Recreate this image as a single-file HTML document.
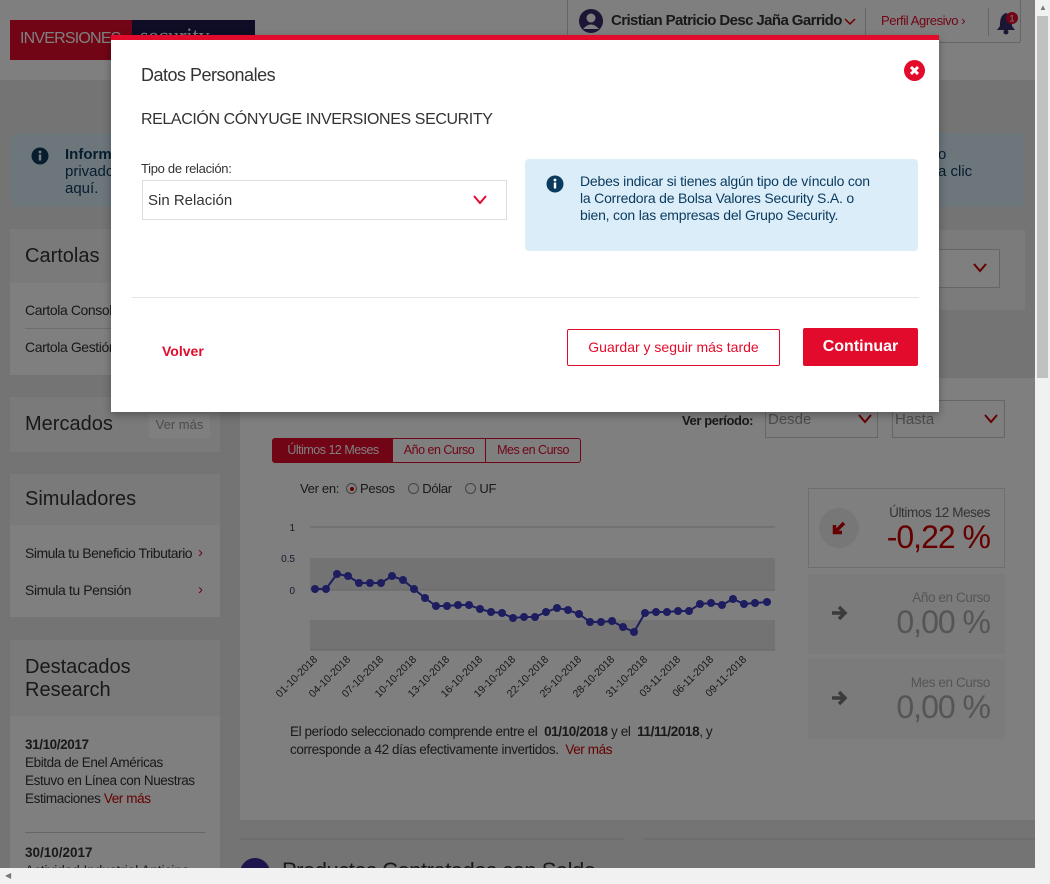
<!DOCTYPE html>
<html><head><meta charset="utf-8">
<style>
*{box-sizing:border-box;margin:0;padding:0}
html,body{overflow:hidden}
body{width:1050px;height:884px;background:#e9e9e9;font-family:"Liberation Sans",sans-serif;color:#333;position:relative}
.a{position:absolute;white-space:nowrap}
.card{background:#fff}
.hd{background:#f4f4f4}
.ov{position:absolute;left:0;top:0;width:1035px;height:868px;background:rgba(0,0,0,.5)}
.n{letter-spacing:-0.4px}
</style></head><body>
<!-- header -->
<div class="a" style="left:0;top:0;width:1035px;height:80px;background:#fff"></div>
<div class="a" style="left:10px;top:20px;width:122px;height:40px;background:#e30b2b;color:#fff;font-size:16px;letter-spacing:-0.8px;line-height:38px;padding-left:10px">INVERSIONES</div>
<div class="a" style="left:132px;top:20px;width:123px;height:40px;background:#1e1a4a;color:#fff;font-family:'Liberation Serif',serif;font-size:22px;line-height:32px;padding-left:8px">security</div>
<div class="a" style="left:567px;top:0;width:1px;height:42px;background:#ccc"></div>
<div class="a" style="left:567px;top:42px;width:453px;height:1px;background:#ccc"></div>
<div class="a" style="left:1020px;top:0;width:1px;height:42px;background:#ccc"></div>
<svg class="a" style="left:578px;top:8px" width="26" height="26"><circle cx="13" cy="13" r="12" fill="#3a2a6a"/><circle cx="13" cy="10" r="4.5" fill="#fff"/><path d="M5 21 Q13 12 21 21" fill="#fff"/></svg>
<div class="a" style="left:611px;top:12px;font-size:15px;letter-spacing:-0.6px;font-weight:bold;color:#333">Cristian Patricio Desc Jaña Garrido</div>
<svg class="a" style="left:844px;top:17px" width="12" height="10"><path d="M1 2 L6 7 L11 2" fill="none" stroke="#c00" stroke-width="1.5"/></svg>
<div class="a" style="left:865px;top:8px;width:1px;height:28px;background:#ccc"></div>
<div class="a" style="left:881px;top:13px;font-size:13px;letter-spacing:-0.4px;color:#e30b2b">Perfil Agresivo ›</div>
<div class="a" style="left:988px;top:8px;width:1px;height:28px;background:#ccc"></div>
<svg class="a" style="left:995px;top:10px" width="26" height="26"><path d="M11 3 C5 5 5 12 5 16 L2 20 L20 20 L17 16 C17 12 17 5 11 3Z" fill="#3a2a6a"/><circle cx="11" cy="22" r="2.5" fill="#3a2a6a"/><circle cx="17" cy="8" r="6" fill="#e30b2b"/><text x="17" y="11.5" font-size="9" fill="#fff" text-anchor="middle" font-family="Liberation Sans">1</text></svg>
<!-- info banner -->
<div class="a" style="left:10px;top:133px;width:1015px;height:74px;background:#d9ecf7;border-radius:6px"></div>
<svg class="a" style="left:31px;top:147px" width="18" height="18"><circle cx="9" cy="9" r="8.5" fill="#0a3a5e"/><rect x="7.8" y="7.5" width="2.4" height="6" fill="#fff"/><circle cx="9" cy="5" r="1.4" fill="#fff"/></svg>
<div class="a" style="left:65px;top:146px;font-size:15px;color:#0a3a5e;line-height:17px"><b>Informa</b><br>privado<br>aquí.</div>
<div class="a" style="left:938px;top:146px;font-size:15px;color:#0a3a5e;line-height:17px">o<br>a clic</div>
<!-- sidebar -->
<div class="a hd" style="left:10px;top:229px;width:210px;height:54px"></div>
<div class="a" style="left:25px;top:245px;font-size:20px">Cartolas</div>
<div class="a card" style="left:10px;top:283px;width:210px;height:92px"></div>
<div class="a n" style="left:25px;top:302px;font-size:14px">Cartola Consol</div>
<div class="a" style="left:25px;top:328px;width:180px;height:1px;background:#ddd"></div>
<div class="a n" style="left:25px;top:339px;font-size:14px">Cartola Gestión</div>
<div class="a hd" style="left:10px;top:397px;width:210px;height:55px"></div>
<div class="a" style="left:25px;top:413px;font-size:20px">Mercados</div>
<div class="a" style="left:149px;top:414px;width:61px;height:24px;background:#fff;color:#999;font-size:13px;text-align:center;line-height:22px">Ver más</div>
<div class="a hd" style="left:10px;top:474px;width:210px;height:51px"></div>
<div class="a" style="left:25px;top:488px;font-size:20px">Simuladores</div>
<div class="a card" style="left:10px;top:525px;width:210px;height:92px"></div>
<div class="a" style="left:25px;top:545px;font-size:14px;letter-spacing:-0.5px">Simula tu Beneficio Tributario</div>
<div class="a" style="left:198px;top:544px;font-size:15px;color:#e30b2b">›</div>
<div class="a n" style="left:25px;top:582px;font-size:14px">Simula tu Pensión</div>
<div class="a" style="left:198px;top:581px;font-size:15px;color:#e30b2b">›</div>
<div class="a hd" style="left:10px;top:640px;width:210px;height:76px"></div>
<div class="a" style="left:25px;top:656px;font-size:20px;line-height:23px">Destacados<br>Research</div>
<div class="a card" style="left:10px;top:716px;width:210px;height:160px"></div>
<div class="a" style="left:25px;top:736px;font-size:13.5px;letter-spacing:-0.4px;line-height:18px"><b>31/10/2017</b><br>Ebitda de Enel Américas<br>Estuvo en Línea con Nuestras<br>Estimaciones <span style="color:#c00">Ver más</span></div>
<div class="a" style="left:25px;top:832px;width:180px;height:1px;background:#ccc"></div>
<div class="a" style="left:25px;top:844px;font-size:13.5px;line-height:18px"><b>30/10/2017</b><br>Actividad Industrial Anticipa</div>
<!-- main -->
<div class="a" style="left:940px;top:230px;width:85px;height:80px;background:#f7f7f7"></div>
<div class="a card" style="left:915px;top:249px;width:85px;height:39px;border:1px solid #ccc"></div>
<svg class="a" style="left:972px;top:262px" width="16" height="12"><path d="M2 2 L8 9 L14 2" fill="none" stroke="#c00" stroke-width="2"/></svg>
<div class="a card" style="left:240px;top:378px;width:795px;height:442px"></div>
<div class="a" style="left:682px;top:413px;font-size:13px;letter-spacing:-0.4px;font-weight:bold">Ver período:</div>
<div class="a card" style="left:765px;top:400px;width:113px;height:38px;border:1px solid #ccc;font-size:15px;color:#999;padding:10px 2px">Desde</div>
<svg class="a" style="left:857px;top:413px" width="16" height="12"><path d="M2 2 L8 9 L14 2" fill="none" stroke="#c00" stroke-width="2"/></svg>
<div class="a card" style="left:892px;top:400px;width:113px;height:38px;border:1px solid #ccc;font-size:15px;color:#999;padding:10px 2px">Hasta</div>
<svg class="a" style="left:983px;top:413px" width="16" height="12"><path d="M2 2 L8 9 L14 2" fill="none" stroke="#c00" stroke-width="2"/></svg>
<div class="a" style="left:272px;top:438px;width:309px;height:25px;border:1px solid #e30b2b;border-radius:3px;font-size:12.5px;letter-spacing:-0.5px;line-height:23px;color:#e30b2b;display:flex">
<div style="width:120px;background:#e30b2b;color:#fff;text-align:center">Últimos 12 Meses</div><div style="width:93px;text-align:center;border-right:1px solid #e30b2b">Año en Curso</div><div style="flex:1;text-align:center">Mes en Curso</div></div>
<div class="a" style="left:300px;top:481px;font-size:13px;letter-spacing:-0.3px;color:#333">Ver en: &nbsp;<span style="display:inline-block;width:11px;height:11px;border:1px solid #888;border-radius:50%;vertical-align:-1px;position:relative"><span style="position:absolute;left:3px;top:3px;width:4px;height:4px;background:#c00;border-radius:50%"></span></span> Pesos &nbsp;&nbsp; <span style="display:inline-block;width:11px;height:11px;border:1px solid #888;border-radius:50%;vertical-align:-1px"></span> Dólar &nbsp;&nbsp; <span style="display:inline-block;width:11px;height:11px;border:1px solid #888;border-radius:50%;vertical-align:-1px"></span> UF</div>
<svg class="a" style="left:240px;top:510px" width="560" height="200" font-family="Liberation Sans" font-size="10">
<rect x="70" y="48" width="465" height="32" fill="#e6e6e6"/><rect x="70" y="110" width="465" height="30" fill="#e6e6e6"/>
<line x1="70" y1="17" x2="535" y2="17" stroke="#ccc"/><line x1="70" y1="80" x2="535" y2="80" stroke="#ccc"/><line x1="70" y1="140" x2="535" y2="140" stroke="#ccc"/>
<text x="55" y="21" fill="#336" text-anchor="end">1</text><text x="55" y="52" fill="#336" text-anchor="end">0.5</text><text x="55" y="84" fill="#336" text-anchor="end">0</text>
<polyline fill="none" stroke="#3a3ac0" stroke-width="2" points="75,79 86,79 97,64 108,66 119,73 130,73 141,73 152,66 163,70 174,79 185,88 196,96 207,96 218,95 229,95 240,99 251,102 262,103 273,108 284,107 295,107 306,102 317,98 328,100 339,104 350,112 361,112 372,111 383,117 394,122 405,103 416,102 427,102 438,101 449,101 460,94 471,93 482,95 493,89 504,94 515,93 527,92"/>
<g fill="#3a3ac0"><circle cx="75" cy="79" r="4"/><circle cx="86" cy="79" r="4"/><circle cx="97" cy="64" r="4"/><circle cx="108" cy="66" r="4"/><circle cx="119" cy="73" r="4"/><circle cx="130" cy="73" r="4"/><circle cx="141" cy="73" r="4"/><circle cx="152" cy="66" r="4"/><circle cx="163" cy="70" r="4"/><circle cx="174" cy="79" r="4"/><circle cx="185" cy="88" r="4"/><circle cx="196" cy="96" r="4"/><circle cx="207" cy="96" r="4"/><circle cx="218" cy="95" r="4"/><circle cx="229" cy="95" r="4"/><circle cx="240" cy="99" r="4"/><circle cx="251" cy="102" r="4"/><circle cx="262" cy="103" r="4"/><circle cx="273" cy="108" r="4"/><circle cx="284" cy="107" r="4"/><circle cx="295" cy="107" r="4"/><circle cx="306" cy="102" r="4"/><circle cx="317" cy="98" r="4"/><circle cx="328" cy="100" r="4"/><circle cx="339" cy="104" r="4"/><circle cx="350" cy="112" r="4"/><circle cx="361" cy="112" r="4"/><circle cx="372" cy="111" r="4"/><circle cx="383" cy="117" r="4"/><circle cx="394" cy="122" r="4"/><circle cx="405" cy="103" r="4"/><circle cx="416" cy="102" r="4"/><circle cx="427" cy="102" r="4"/><circle cx="438" cy="101" r="4"/><circle cx="449" cy="101" r="4"/><circle cx="460" cy="94" r="4"/><circle cx="471" cy="93" r="4"/><circle cx="482" cy="95" r="4"/><circle cx="493" cy="89" r="4"/><circle cx="504" cy="94" r="4"/><circle cx="515" cy="93" r="4"/><circle cx="527" cy="92" r="4"/></g>
<g fill="#333" font-size="10.5">
<text transform="translate(78,150) rotate(-45)" text-anchor="end">01-10-2018</text>
<text transform="translate(111,150) rotate(-45)" text-anchor="end">04-10-2018</text>
<text transform="translate(144,150) rotate(-45)" text-anchor="end">07-10-2018</text>
<text transform="translate(177,150) rotate(-45)" text-anchor="end">10-10-2018</text>
<text transform="translate(210,150) rotate(-45)" text-anchor="end">13-10-2018</text>
<text transform="translate(243,150) rotate(-45)" text-anchor="end">16-10-2018</text>
<text transform="translate(276,150) rotate(-45)" text-anchor="end">19-10-2018</text>
<text transform="translate(309,150) rotate(-45)" text-anchor="end">22-10-2018</text>
<text transform="translate(342,150) rotate(-45)" text-anchor="end">25-10-2018</text>
<text transform="translate(375,150) rotate(-45)" text-anchor="end">28-10-2018</text>
<text transform="translate(408,150) rotate(-45)" text-anchor="end">31-10-2018</text>
<text transform="translate(441,150) rotate(-45)" text-anchor="end">03-11-2018</text>
<text transform="translate(474,150) rotate(-45)" text-anchor="end">06-11-2018</text>
<text transform="translate(507,150) rotate(-45)" text-anchor="end">09-11-2018</text></g>
</svg>
<div class="a" style="left:290px;top:723px;font-size:13.5px;letter-spacing:-0.4px;line-height:18px;color:#333">El período seleccionado comprende entre el &nbsp;<b>01/10/2018</b> y el &nbsp;<b>11/11/2018</b>, y<br>corresponde a 42 días efectivamente invertidos. &nbsp;<span style="color:#c00">Ver más</span></div>
<div class="a card" style="left:808px;top:488px;width:197px;height:80px;border:1px solid #ddd"></div>
<div class="a" style="left:819px;top:508px;width:40px;height:40px;border-radius:50%;background:#eee"></div>
<svg class="a" style="left:831px;top:520px" width="16" height="16"><path d="M13 3 L5 11 M3.5 5 L3.5 12.5 L11 12.5" fill="none" stroke="#c00" stroke-width="3.5"/></svg>
<div class="a" style="left:830px;top:505px;width:160px;text-align:right;font-size:13.5px;letter-spacing:-0.4px;color:#666">Últimos 12 Meses</div>
<div class="a" style="left:830px;top:519px;width:160px;text-align:right;font-size:32px;letter-spacing:-1px;color:#c00">-0,22 %</div>
<div class="a" style="left:808px;top:574px;width:197px;height:80px;background:#f7f7f7"></div>
<svg class="a" style="left:830px;top:604px" width="18" height="18"><path d="M2 9 L14 9 M9 3 L15 9 L9 15" fill="none" stroke="#777" stroke-width="3.5"/></svg>
<div class="a" style="left:830px;top:590px;width:160px;text-align:right;font-size:13.5px;letter-spacing:-0.4px;color:#aaa">Año en Curso</div>
<div class="a" style="left:830px;top:604px;width:160px;text-align:right;font-size:32px;letter-spacing:-1px;color:#aaa">0,00 %</div>
<div class="a" style="left:808px;top:659px;width:197px;height:80px;background:#f7f7f7"></div>
<svg class="a" style="left:830px;top:689px" width="18" height="18"><path d="M2 9 L14 9 M9 3 L15 9 L9 15" fill="none" stroke="#777" stroke-width="3.5"/></svg>
<div class="a" style="left:830px;top:675px;width:160px;text-align:right;font-size:13.5px;letter-spacing:-0.4px;color:#aaa">Mes en Curso</div>
<div class="a" style="left:830px;top:689px;width:160px;text-align:right;font-size:32px;letter-spacing:-1px;color:#aaa">0,00 %</div>
<div class="a" style="left:240px;top:838px;width:384px;height:2px;background:#ddd"></div>
<div class="a" style="left:643px;top:838px;width:392px;height:2px;background:#ddd"></div>
<div class="a" style="left:240px;top:858px;width:30px;height:30px;border-radius:50%;background:#3a2a9a"></div>
<div class="a" style="left:282px;top:858px;font-size:22px;letter-spacing:-0.5px;color:#333">Productos Contratados con Saldo</div>
<!-- overlay -->
<div class="ov"></div>
<!-- scrollbars -->
<div class="a" style="left:1035px;top:0;width:15px;height:884px;background:#f1f1f1"></div>
<div class="a" style="left:1037px;top:16px;width:11px;height:362px;background:#c1c1c1"></div>
<div class="a" style="left:1039px;top:3px;font-size:8px;color:#777">▲</div>
<div class="a" style="left:0;top:868px;width:1035px;height:16px;background:#f1f1f1"></div>
<div class="a" style="left:5px;top:871px;font-size:8px;color:#777">◀</div>
<!-- modal -->
<div class="a" style="left:111px;top:35px;width:828px;height:377px;background:#fff;border-top:5px solid #e30b2b;box-shadow:0 3px 8px rgba(0,0,0,.3)">
<div class="a" style="left:30px;top:25px;font-size:18px;letter-spacing:-0.5px;color:#333">Datos Personales</div>
<svg class="a" style="left:793px;top:20px" width="21" height="21"><circle cx="10.5" cy="10.5" r="10.5" fill="#e30b2b"/><path d="M7 7 L14 14 M14 7 L7 14" stroke="#fff" stroke-width="3"/></svg>
<div class="a" style="left:30px;top:71px;font-size:16px;letter-spacing:-0.4px;color:#333">RELACIÓN CÓNYUGE INVERSIONES SECURITY</div>
<div class="a" style="left:30px;top:121px;font-size:13px;letter-spacing:-0.3px;color:#333">Tipo de relación:</div>
<div class="a" style="left:31px;top:140px;width:365px;height:40px;border:1px solid #ddd;font-size:15px;padding:11px 5px;color:#333">Sin Relación<svg style="position:absolute;right:18px;top:13px" width="16" height="12"><path d="M2 2 L8 9 L14 2" fill="none" stroke="#e30b2b" stroke-width="2"/></svg></div>
<div class="a" style="left:414px;top:119px;width:393px;height:92px;background:#dbedf8;border-radius:4px"></div>
<svg class="a" style="left:435px;top:135px" width="18" height="18"><circle cx="9" cy="9" r="8.5" fill="#0a3a5e"/><rect x="7.8" y="7.5" width="2.4" height="6" fill="#fff"/><circle cx="9" cy="5" r="1.4" fill="#fff"/></svg>
<div class="a" style="left:469px;top:133px;font-size:14px;letter-spacing:-0.2px;line-height:17px;color:#0a3a5e">Debes indicar si tienes algún tipo de vínculo con<br>la Corredora de Bolsa Valores Security S.A. o<br>bien, con las empresas del Grupo Security.</div>
<div class="a" style="left:21px;top:257px;width:787px;height:1px;background:#e5e5e5"></div>
<div class="a" style="left:51px;top:303px;font-size:14px;font-weight:bold;color:#e30b2b">Volver</div>
<div class="a" style="left:456px;top:289px;width:213px;height:37px;border:1px solid #e30b2b;border-radius:2px;font-size:14px;color:#e30b2b;text-align:center;line-height:35px">Guardar y seguir más tarde</div>
<div class="a" style="left:692px;top:288px;width:115px;height:38px;background:#e30b2b;border-radius:2px;font-size:16px;font-weight:bold;color:#fff;text-align:center;line-height:38px">Continuar</div>
</div>
</body></html>
